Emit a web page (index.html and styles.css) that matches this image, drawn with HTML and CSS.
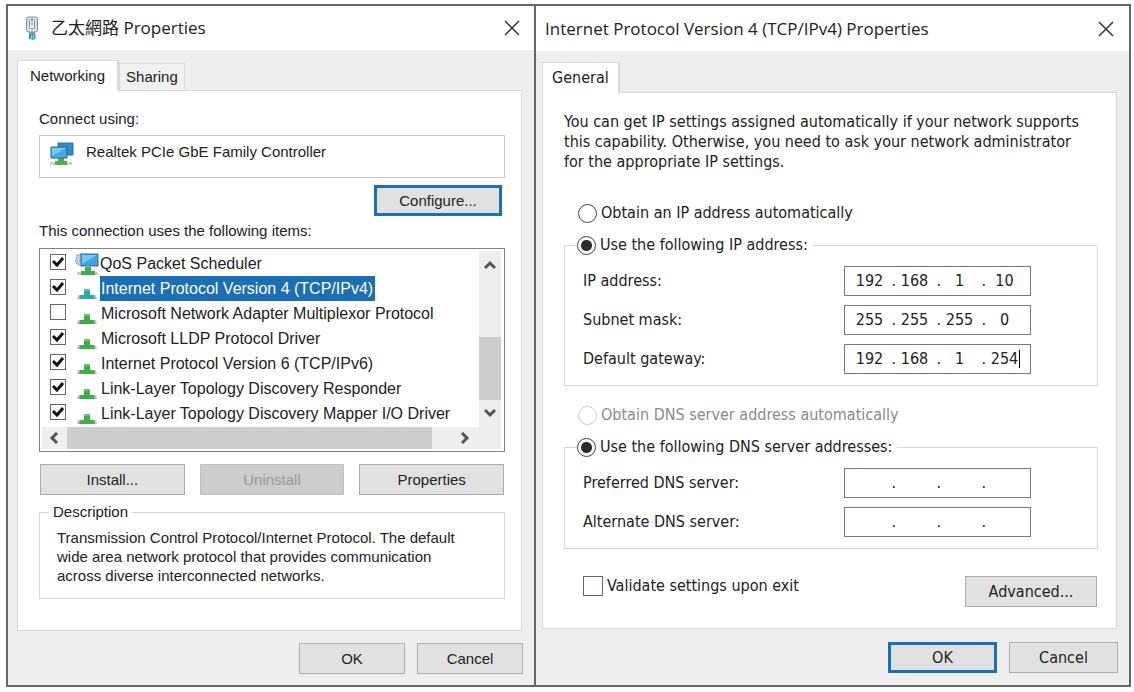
FILE: index.html
```html
<!DOCTYPE html>
<html lang="en">
<head>
    <meta charset="UTF-8">
    <meta name="viewport" content="width=device-width, initial-scale=1.0">
    <title>Ethernet Properties</title>
    <link rel="stylesheet" href="styles.css">
</head>
<body>
    <svg class="defs" width="0" height="0" aria-hidden="true">
        <symbol id="close" viewBox="0 0 16 16">
            <path d="M1 1L15 15M15 1L1 15" stroke="#333" stroke-width="1.5" fill="none"/>
        </symbol>
        <symbol id="service" viewBox="0 0 20 22">
            <path d="M1 17h18l1 4H0z" fill="#c4c8c4"/>
            <path d="M7 11h6v6h4l1 4H2l1-4h4z" fill="#41ad48"/>
            <path d="M7 11h6v2H7z" fill="#6cc56c"/>
        </symbol>
        <symbol id="chevron" viewBox="0 0 12 12">
            <path d="M1 9L6 4L11 9" stroke="#555" stroke-width="3" fill="none"/>
        </symbol>
    </svg>

    <main class="desktop">
        <section class="window adapter">
            <header class="title-bar">
                <svg class="plug" viewBox="0 0 14 24">
                    <path d="M4 15h6v4H4z" fill="#8d99a8"/>
                    <path d="M4 18h2v5H4zM6.500 18h2v6h-2zM9 18h1.500v5H9z" fill="#23a3b8"/>
                    <rect x="1.500" y="1" width="11" height="15" rx="2" fill="#d6dfec" stroke="#8190a6"/>
                    <rect x="4.500" y="3.500" width="5" height="9" rx="1" fill="#f4f7fb" stroke="#8190a6"/>
                    <path d="M7 4v6" stroke="#71819b"/>
                </svg>
                <h1>乙太網路 Properties</h1>
                <button class="close" aria-label="Close"><svg><use href="#close"/></svg></button>
            </header>
            <div class="content">
                <nav class="tabs">
                    <button class="tab active">Networking</button>
                    <button class="tab">Sharing</button>
                </nav>
                <div class="panel">
                    <p class="caption">Connect using:</p>
                    <div class="device">
                        <svg class="device-icon" viewBox="0 0 24 24">
                            <path d="M0 20h22v3H0z" fill="#d0d5d0"/>
                            <path d="M8 16h6v3h3v4H5v-4h3z" fill="#4cb04c"/>
                            <path d="M8 1h15v12H8z" fill="#2f8fc9" stroke="#2a6f9f"/>
                            <path d="M1 5h16v11H1z" fill="#45a8e2" stroke="#28688f"/>
                            <path d="M2 6h14L2 14z" fill="#76c6f2"/>
                        </svg>
                        <span>Realtek PCIe GbE Family Controller</span>
                    </div>
                    <button class="button focused configure">Configure...</button>
                    <p class="caption items-caption">This connection uses the following items:</p>
                    <div class="items">
                        <ul class="item-list">
                            <li>
                                <input type="checkbox" id="qos" checked>
                                <svg class="qos" viewBox="0 0 24 24">
                                    <path d="M6 2L2 3L1 7L0 9L2 12L5 14H9V2z" fill="#c3cbd0" stroke="#87939a" stroke-dasharray="2 1"/>
                                    <path d="M2 20h21v3H2z" fill="#c9cfc9"/>
                                    <path d="M10 15h6v4h4v4H6v-4h4z" fill="#41ad48"/>
                                    <path d="M6 2h17v12H6z" fill="#3fa4dc" stroke="#286f9e"/>
                                    <path d="M7 3h15L7 12z" fill="#78c8f1"/>
                                </svg>
                                <label for="qos">QoS Packet Scheduler</label>
                            </li>
                            <li class="selected">
                                <input type="checkbox" id="ipv4" checked>
                                <svg><use href="#service"/></svg>
                                <label for="ipv4">Internet Protocol Version 4 (TCP/IPv4)</label>
                            </li>
                            <li>
                                <input type="checkbox" id="multiplexor">
                                <svg><use href="#service"/></svg>
                                <label for="multiplexor">Microsoft Network Adapter Multiplexor Protocol</label>
                            </li>
                            <li>
                                <input type="checkbox" id="lldp" checked>
                                <svg><use href="#service"/></svg>
                                <label for="lldp">Microsoft LLDP Protocol Driver</label>
                            </li>
                            <li>
                                <input type="checkbox" id="ipv6" checked>
                                <svg><use href="#service"/></svg>
                                <label for="ipv6">Internet Protocol Version 6 (TCP/IPv6)</label>
                            </li>
                            <li>
                                <input type="checkbox" id="responder" checked>
                                <svg><use href="#service"/></svg>
                                <label for="responder">Link-Layer Topology Discovery Responder</label>
                            </li>
                            <li>
                                <input type="checkbox" id="mapper" checked>
                                <svg><use href="#service"/></svg>
                                <label for="mapper">Link-Layer Topology Discovery Mapper I/O Driver</label>
                            </li>
                        </ul>
                        <div class="scroll vertical">
                            <svg><use href="#chevron"/></svg>
                            <span class="thumb"></span>
                            <svg class="down"><use href="#chevron"/></svg>
                        </div>
                        <div class="scroll horizontal">
                            <svg class="left"><use href="#chevron"/></svg>
                            <span class="thumb"></span>
                            <svg class="right"><use href="#chevron"/></svg>
                        </div>
                    </div>
                    <div class="actions">
                        <button class="button">Install...</button>
                        <button class="button" disabled>Uninstall</button>
                        <button class="button">Properties</button>
                    </div>
                    <fieldset class="description">
                        <legend>Description</legend>
                        <p>Transmission Control Protocol/Internet Protocol. The default wide area network protocol that provides communication across diverse interconnected networks.</p>
                    </fieldset>
                </div>
            </div>
            <footer>
                <button class="button">OK</button>
                <button class="button">Cancel</button>
            </footer>
        </section>

        <section class="window protocol">
            <header class="title-bar">
                <h1>Internet Protocol Version 4 (TCP/IPv4) Properties</h1>
                <button class="close" aria-label="Close"><svg><use href="#close"/></svg></button>
            </header>
            <div class="content">
                <nav class="tabs">
                    <button class="tab active">General</button>
                </nav>
                <div class="panel">
                    <p class="intro">You can get IP settings assigned automatically if your network supports this capability. Otherwise, you need to ask your network administrator for the appropriate IP settings.</p>
                    <div class="choice">
                        <input type="radio" name="ip" id="ip-auto">
                        <label for="ip-auto">Obtain an IP address automatically</label>
                    </div>
                    <fieldset class="addresses">
                        <legend class="choice">
                            <input type="radio" name="ip" id="ip-manual" checked>
                            <label for="ip-manual">Use the following IP address:</label>
                        </legend>
                        <div class="field">
                            <label for="address">IP address:</label>
                            <div class="ip">
                                <input id="address" value="192"><span>.</span><input value="168" aria-label="Octet 2"><span>.</span><input value="1" aria-label="Octet 3"><span>.</span><input value="10" aria-label="Octet 4">
                            </div>
                        </div>
                        <div class="field">
                            <label for="mask">Subnet mask:</label>
                            <div class="ip">
                                <input id="mask" value="255"><span>.</span><input value="255" aria-label="Octet 2"><span>.</span><input value="255" aria-label="Octet 3"><span>.</span><input value="0" aria-label="Octet 4">
                            </div>
                        </div>
                        <div class="field">
                            <label for="gateway">Default gateway:</label>
                            <div class="ip editing">
                                <input id="gateway" value="192"><span>.</span><input value="168" aria-label="Octet 2"><span>.</span><input value="1" aria-label="Octet 3"><span>.</span><input value="254" aria-label="Octet 4">
                            </div>
                        </div>
                    </fieldset>
                    <div class="choice">
                        <input type="radio" name="dns" id="dns-auto" disabled>
                        <label for="dns-auto">Obtain DNS server address automatically</label>
                    </div>
                    <fieldset class="addresses">
                        <legend class="choice">
                            <input type="radio" name="dns" id="dns-manual" checked>
                            <label for="dns-manual">Use the following DNS server addresses:</label>
                        </legend>
                        <div class="field">
                            <label for="preferred">Preferred DNS server:</label>
                            <div class="ip">
                                <input id="preferred"><span>.</span><input aria-label="Octet 2"><span>.</span><input aria-label="Octet 3"><span>.</span><input aria-label="Octet 4">
                            </div>
                        </div>
                        <div class="field">
                            <label for="alternate">Alternate DNS server:</label>
                            <div class="ip">
                                <input id="alternate"><span>.</span><input aria-label="Octet 2"><span>.</span><input aria-label="Octet 3"><span>.</span><input aria-label="Octet 4">
                            </div>
                        </div>
                    </fieldset>
                    <div class="options">
                        <div class="validate">
                            <input type="checkbox" id="validate">
                            <label for="validate">Validate settings upon exit</label>
                        </div>
                        <button class="button advanced">Advanced...</button>
                    </div>
                </div>
            </div>
            <footer>
                <button class="button focused">OK</button>
                <button class="button">Cancel</button>
            </footer>
        </section>
    </main>
</body>
</html>
```

FILE: styles.css
```css
* {
    box-sizing: border-box;
}
body {
    margin: 0;
    background-color: white;
    color: #222;
}
h1, p, ul, fieldset, legend {
    margin: 0;
    padding: 0;
}
button, input {
    font: inherit;
    color: inherit;
    margin: 0;
}
.defs {
    position: absolute;
}
.desktop {
    display: grid;
    grid-template-columns: 528fr 593fr;
    margin: 4px 3px 5px 6px;
    border: 2px solid #666;
}
.window {
    display: flex;
    flex-direction: column;
    background-color: #eee;
}
.adapter {
    border-right: 2px solid #666;
    font: 15px/20px "Liberation Sans", Arial, sans-serif;
}
.protocol {
    font: 16px/20px "DejaVu Sans Condensed", Tahoma, sans-serif;
}

/* Title bar */
.title-bar {
    display: flex;
    align-items: center;
    height: 44px;
    padding: 0 12px 0 17px;
    background-color: white;
}
.protocol .title-bar {
    height: 45px;
    padding: 0 13px 0 9px;
}
.title-bar h1 {
    flex: 1;
    font: 17px/24px "Open Sans", "Noto Sans CJK TC", sans-serif;
}
.plug {
    width: 14px;
    height: 24px;
    margin-right: 12px;
}
.close {
    display: flex;
    padding: 2px;
    border: none;
    background: none;
}
.close svg {
    width: 16px;
    height: 16px;
}

/* Tabs */
.content {
    padding: 10px 12px 0 9px;
}
.protocol .content {
    padding: 11px 12px 0 6px;
}
.tabs {
    display: flex;
    align-items: flex-end;
}
.tab {
    height: 27px;
    padding: 0 6px;
    border: 1px solid #d9d9d9;
    border-bottom: none;
    background-color: #f0f0f0;
}
.tab.active {
    position: relative;
    height: 31px;
    margin-bottom: -1px;
    padding: 0 12px;
    border-right-width: 2px;
    background-color: white;
}
.protocol .tab.active {
    padding: 0 9px;
}
.panel {
    border: 1px solid #d9d9d9;
    background-color: white;
}
.adapter .panel {
    height: 541px;
    padding: 18px 16px 0 21px;
}
.protocol .panel {
    height: 537px;
    padding: 19px 18px 0 21px;
}

/* Buttons */
.button {
    height: 31px;
    padding: 0;
    border: 1px solid #adadad;
    background-color: #e1e1e1;
}
.button:disabled {
    border-color: #bfbfbf;
    background-color: #ccc;
    color: #999;
}
.button.focused {
    border: 3px solid #1a6fb5;
}
footer {
    display: flex;
    justify-content: flex-end;
    gap: 12px;
    padding: 12px 11px 11px 0;
}
.protocol footer {
    padding-top: 13px;
}
.adapter footer .button {
    width: 106px;
}
.protocol footer .button {
    width: 109px;
}

/* Tick boxes and radios */
input[type="checkbox"],
input[type="radio"] {
    appearance: none;
    flex: none;
    border: 1px solid #666;
    background: white center no-repeat;
}
input[type="checkbox"] {
    width: 16px;
    height: 16px;
}
input[type="checkbox"]:checked {
    background-image: url("data:image/svg+xml,%3Csvg xmlns='http://www.w3.org/2000/svg' width='14' height='14'%3E%3Cpath d='M2 6L6 10L12 3' fill='none' stroke='%23111' stroke-width='3'/%3E%3C/svg%3E");
}
input[type="radio"] {
    width: 19px;
    height: 19px;
    border-radius: 50%;
    border-color: #444;
}
input[type="radio"]:checked {
    background-image: radial-gradient(circle, #2b2b2b 5px, transparent 6px);
}
input[type="radio"]:disabled {
    border-color: #ccc;
}
input[type="radio"]:disabled + label {
    color: #8a8a8a;
}

/* Adapter window */
.device {
    display: flex;
    height: 43px;
    margin-top: 6px;
    padding: 6px 10px;
    border: 1px solid #c8c8c8;
}
.device-icon {
    width: 24px;
    height: 24px;
    margin-right: 12px;
}
.configure {
    display: block;
    width: 128px;
    margin: 7px 3px 5px auto;
}
.items {
    display: grid;
    grid-template-columns: 1fr 22px;
    height: 204px;
    margin-top: 7px;
    padding: 2px 3px 2px 2px;
    border: 1px solid #828282;
}
.item-list {
    font-size: 16px;
    list-style: none;
}
.item-list li {
    display: flex;
    align-items: center;
    height: 25px;
    padding-left: 8px;
}
.item-list input[type="checkbox"] {
    margin-bottom: 4px;
}
.item-list svg {
    width: 20px;
    height: 22px;
    margin: 1px 3px 0 11px;
}
.item-list .qos {
    width: 24px;
    height: 24px;
    margin: 0 0 0 9px;
}
.item-list label {
    height: 25px;
    padding: 0 2px 0 1px;
    line-height: 25px;
    white-space: nowrap;
}
.selected label {
    background-color: #1a6fb5;
    color: white;
}
.selected svg {
    filter: hue-rotate(50deg);
}
.scroll {
    display: flex;
    align-items: center;
    background-color: #eee;
}
.scroll svg {
    width: 12px;
    height: 12px;
}
.scroll .down {
    transform: rotate(180deg);
}
.scroll .left {
    transform: rotate(-90deg);
}
.scroll .right {
    transform: rotate(90deg);
}
.thumb {
    background-color: #cdcdcd;
}
.vertical {
    flex-direction: column;
    padding: 8px 0;
}
.vertical .thumb {
    width: 22px;
    height: 63px;
    margin: auto 0 7px;
}
.horizontal {
    grid-column: 1 / 3;
    height: 22px;
    padding: 0 30px 0 6px;
}
.horizontal .thumb {
    flex: 1;
    height: 22px;
    margin: 0 27px 0 7px;
}
.actions {
    display: grid;
    grid-template-columns: repeat(3, 1fr);
    gap: 15px;
    margin: 12px 1px 7px;
}
.description {
    height: 97px;
    padding: 6px 17px 0;
    border: 1px solid #d9d9d9;
}
.description legend {
    margin-left: -8px;
    padding: 0 4px;
}
.description p {
    padding-right: 12px;
    line-height: 19px;
}

/* Protocol window */
.intro {
    margin-bottom: 31px;
    padding-right: 12px;
}
.choice {
    display: flex;
    align-items: center;
    gap: 4px;
    height: 20px;
    margin-left: 14px;
}
.addresses {
    display: grid;
    gap: 9px;
    margin: 12px 0 19px;
    padding: 11px 66px 11px 18px;
    border: 1px solid #d9d9d9;
}
.addresses legend {
    margin-left: -6px;
    padding-right: 5px;
    background-color: white;
}
.field {
    display: flex;
    align-items: center;
    justify-content: space-between;
}
.ip {
    display: flex;
    align-items: center;
    width: 187px;
    height: 30px;
    padding-left: 6px;
    border: 1px solid #777;
}
.ip input {
    width: 37px;
    padding: 0;
    border: none;
    background: none;
    text-align: center;
}
.ip span {
    width: 8px;
    text-align: right;
}
.editing::after {
    content: "";
    width: 1px;
    height: 18px;
    margin-left: -4px;
    background-color: black;
}
.options {
    display: flex;
    justify-content: space-between;
    padding: 8px 1px 0 19px;
}
.validate {
    display: flex;
    align-items: center;
    gap: 4px;
    height: 20px;
}
.validate input[type="checkbox"] {
    width: 20px;
    height: 20px;
}
.advanced {
    width: 132px;
}
```
